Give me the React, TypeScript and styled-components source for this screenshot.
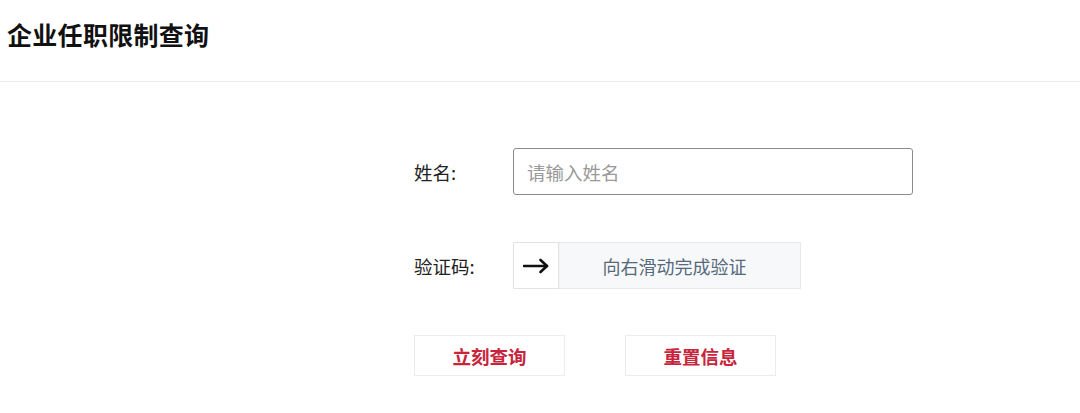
import styled, { createGlobalStyle } from "styled-components";

const GlobalStyle = createGlobalStyle`
     html, body {
          margin: 0;
          padding: 0;
          background: #ffffff;
     }
     body {
          font-family: "Noto Sans CJK SC", "Noto Sans", sans-serif;
          color: #222;
     }
     * {
          box-sizing: border-box;
     }
`;

const StyledPage = styled.div`
     width: 1080px;
     min-height: 413px;
     background: #fff;
`;

const StyledHeader = styled.header`
     height: 82px;
     padding: 16px 0 0 7px;
     border-bottom: 1px solid #ececec;
`;

const StyledTitle = styled.h1`
     margin: 0;
     font-size: 25px;
     line-height: 36px;
     font-weight: 700;
     color: #111;
     letter-spacing: 0.3px;
`;

const StyledForm = styled.form`
     display: flex;
     flex-direction: column;
     padding: 66px 0 0 414px;
`;

const StyledRow = styled.div<{ gap?: number }>`
     display: flex;
     align-items: center;
     margin-bottom: ${(props) => props.gap ?? 47}px;
`;

const StyledLabel = styled.label`
     width: 99px;
     flex-shrink: 0;
     font-size: 18.5px;
     color: #222;
`;

const StyledInput = styled.input`
     width: 400px;
     height: 47px;
     padding: 0 13px;
     border: 1px solid #8c8c8c;
     border-radius: 3px;
     font-family: inherit;
     font-size: 18.5px;
     color: #333;
     outline: none;
     &::placeholder {
          color: #999;
     }
`;

const StyledSlider = styled.div`
     display: flex;
     width: 288px;
     height: 47px;
     background: #f6f8fa;
     border: 1px solid #e6e9ec;
`;

const StyledHandle = styled.div`
     display: flex;
     align-items: center;
     justify-content: center;
     width: 45px;
     height: 100%;
     background: #fff;
     border-right: 1px solid #e3e3e3;
     box-shadow: 0 0 2px rgba(0, 0, 0, 0.08);
`;

const StyledSliderText = styled.span`
     flex: 1;
     display: flex;
     align-items: center;
     justify-content: center;
     padding-right: 10px;
     font-size: 18px;
     color: #56697b;
`;

const StyledActions = styled.div`
     display: flex;
     gap: 60px;
`;

const StyledButton = styled.button`
     width: 151px;
     height: 41px;
     background: #fff;
     border: 1px solid #ececec;
     font-family: inherit;
     font-size: 18.5px;
     font-weight: 700;
     color: #c8243b;
     cursor: pointer;
`;

const ArrowIcon = () => (
     <svg width="26" height="16" viewBox="0 0 26 16" fill="none">
          <path d="M1 8H24" stroke="#111" strokeWidth="2.6" strokeLinecap="round" />
          <path
               d="M17.5 2L24 8L17.5 14"
               stroke="#111"
               strokeWidth="2.6"
               strokeLinecap="round"
               strokeLinejoin="round"
          />
     </svg>
);

export default function App() {
     return (
          <StyledPage>
               <GlobalStyle />
               <StyledHeader>
                    <StyledTitle>企业任职限制查询</StyledTitle>
               </StyledHeader>
               <StyledForm onSubmit={(e) => e.preventDefault()}>
                    <StyledRow>
                         <StyledLabel>姓名:</StyledLabel>
                         <StyledInput placeholder="请输入姓名" />
                    </StyledRow>
                    <StyledRow gap={46}>
                         <StyledLabel>验证码:</StyledLabel>
                         <StyledSlider>
                              <StyledHandle>
                                   <ArrowIcon />
                              </StyledHandle>
                              <StyledSliderText>向右滑动完成验证</StyledSliderText>
                         </StyledSlider>
                    </StyledRow>
                    <StyledActions>
                         <StyledButton type="submit">立刻查询</StyledButton>
                         <StyledButton type="reset">重置信息</StyledButton>
                    </StyledActions>
               </StyledForm>
          </StyledPage>
     );
}
